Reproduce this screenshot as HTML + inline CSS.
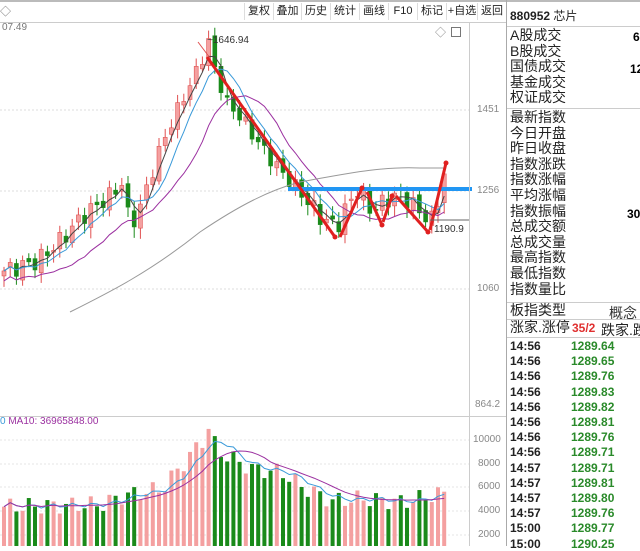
<!DOCTYPE html>
<html><head><meta charset="utf-8"><style>
body{margin:0;width:640px;height:546px;overflow:hidden;background:#fff;font-family:"Liberation Sans","Noto Sans CJK SC",sans-serif;position:relative}
.a{position:absolute;white-space:nowrap}
.tb{position:absolute;top:3px;height:17px;font-size:11px;color:#222;line-height:17px;text-align:center;border-left:1px solid #ddd}
.rp{position:absolute;left:510px;font-size:14px;color:#222;line-height:15.6px}
.t{position:absolute;left:510px;font-size:12px;font-weight:bold;color:#222}
.p{position:absolute;left:571px;font-size:12px;font-weight:bold;color:#2a8a2a}
</style></head><body>
<div class="a" style="left:0;top:0;width:640px;height:2px;background:#bbb"></div>
<div class="a" style="left:0;top:22px;width:506px;height:1px;background:#ccc"></div>
<div class="a" style="left:0;top:3px;font-size:11px;color:#777">◇</div>
<div class="tb" style="left:244px;width:28px">复权</div>
<div class="tb" style="left:273px;width:27px">叠加</div>
<div class="tb" style="left:301px;width:28px">历史</div>
<div class="tb" style="left:330px;width:28px">统计</div>
<div class="tb" style="left:359px;width:28px">画线</div>
<div class="tb" style="left:388px;width:28px">F10</div>
<div class="tb" style="left:417px;width:28px">标记</div>
<div class="tb" style="left:446px;width:30px">+自选</div>
<div class="tb" style="left:477px;width:28px;border-right:1px solid #ddd">返回</div>
<div class="a" style="left:2px;top:22px;font-size:10px;color:#777">07.49</div>
<div class="a" style="left:435px;top:24px;font-size:11px;color:#888">◇</div>
<div class="a" style="left:451px;top:27px;width:8px;height:8px;border:1px solid #777"></div>
<svg id="s" class="a" style="left:0;top:0" width="506" height="546"></svg>
<div class="a" style="left:469px;top:22px;width:1px;height:524px;background:#ccc"></div>
<div class="a" style="left:0;top:416px;width:506px;height:1px;background:#ccc"></div>
<div class="a" style="left:506px;top:0;width:1px;height:546px;background:#aaa"></div>
<div class="a" style="left:477px;top:104px;font-size:10px;color:#888">1451</div>
<div class="a" style="left:477px;top:185px;font-size:10px;color:#888">1256</div>
<div class="a" style="left:477px;top:283px;font-size:10px;color:#888">1060</div>
<div class="a" style="left:475px;top:399px;font-size:10px;color:#888">864.2</div>
<div class="a" style="left:473px;top:434px;font-size:10px;color:#888">10000</div>
<div class="a" style="left:478px;top:458px;font-size:10px;color:#888">8000</div>
<div class="a" style="left:478px;top:481px;font-size:10px;color:#888">6000</div>
<div class="a" style="left:478px;top:505px;font-size:10px;color:#888">4000</div>
<div class="a" style="left:478px;top:529px;font-size:10px;color:#888">2000</div>
<div class="a" style="left:0;top:416px;font-size:10px;color:#3a9ad9">0 <span style="color:#9b30a0">MA10: 36965848.00</span></div>
<div class="a" style="left:207px;top:35px;font-size:10px;color:#333">~1646.94</div>
<div class="a" style="left:434px;top:224px;font-size:10px;color:#333">1190.9</div>
<div class="a" style="left:507px;top:26px;width:133px;height:1px;background:#ccc"></div>
<div class="a" style="left:510px;top:7px;font-size:12px;color:#222;font-weight:bold">880952 <span style="font-weight:normal">芯片</span></div>
<div class="rp" style="top:28px">A股成交<br>B股成交<br>国债成交<br>基金成交<br>权证成交</div>
<div class="a" style="left:507px;top:108px;width:133px;height:1px;background:#ccc"></div>
<div class="rp" style="top:110px">最新指数<br>今日开盘<br>昨日收盘<br>指数涨跌<br>指数涨幅<br>平均涨幅<br>指数振幅<br>总成交额<br>总成交量<br>最高指数<br>最低指数<br>指数量比</div>
<div class="a" style="left:507px;top:302px;width:133px;height:1px;background:#ccc"></div>
<div class="rp" style="top:303px">板指类型</div>
<div class="a" style="left:609px;top:303px;font-size:14px;color:#333">概念</div>
<div class="a" style="left:507px;top:319px;width:133px;height:1px;background:#ccc"></div>
<div class="rp" style="top:320px">涨家.涨停</div>
<div class="a" style="left:572px;top:321px;font-size:12px;color:#e03030;font-weight:bold">35/2</div>
<div class="a" style="left:601px;top:320px;font-size:14px;color:#222">跌家.跌</div>
<div class="a" style="left:507px;top:337px;width:133px;height:1px;background:#ccc"></div>
<div class="a" style="left:633px;top:30px;font-size:12px;font-weight:bold">6</div>
<div class="a" style="left:630px;top:62px;font-size:12px;font-weight:bold">12</div>
<div class="a" style="left:627px;top:207px;font-size:12px;font-weight:bold">30</div>
<div id="tr"></div>
<script>
const S=document.getElementById('s');let h='';
function y(p){const k=[[1650,37],[1451,110],[1256,191],[1060,289],[864,405]];for(let i=0;i<4;i++){const[a,b]=k[i],[c,d]=k[i+1];if(p>=c)return b+(a-p)/(a-c)*(d-b);}return 405;}
[110,191,289].forEach(v=>h+=`<line x1="0" x2="469" y1="${v}" y2="${v}" stroke="#ddd" stroke-dasharray="2,2"/>`);
[440,464,487,511,535].forEach(v=>h+=`<line x1="0" x2="469" y1="${v}" y2="${v}" stroke="#e4e4e4" stroke-dasharray="2,2"/>`);
function mk(K){return x=>{for(let i=0;i<K.length-1;i++)if(x<=K[i+1][0]){const t=(x-K[i][0])/(K[i+1][0]-K[i][0]);return K[i][1]+t*(K[i+1][1]-K[i][1]);}return K[K.length-1][1];};}
const ip=mk([[0,1095],[35,1115],[60,1160],[80,1205],[110,1250],[120,1275],[128,1185],[140,1230],[160,1370],[190,1530],[200,1590],[207,1640],[213,1560],[225,1470],[240,1430],[260,1360],[280,1300],[300,1250],[320,1200],[335,1185],[345,1225],[355,1260],[370,1215],[385,1240],[400,1250],[420,1210],[432,1195],[440,1280],[446,1330]]);
const vk=mk([[0,3300],[100,3500],[120,4200],[160,4800],[180,6800],[200,8800],[207,10000],[215,8000],[250,6500],[280,6200],[300,5000],[330,3800],[360,4000],[400,3700],[446,4500]]);
const N=72,dx=6.2;let C=[],X=[],V=[];
for(let i=0;i<N;i++){const x=2+i*dx;X.push(x);C.push(ip(x)+Math.sin(i*2.3)*18);V.push(vk(x)+Math.sin(i*1.9)*700);}
for(let i=0;i<N;i++){const o=i?C[i-1]+Math.sin(i*1.7)*8:C[0]-10,c=C[i];const up=c>=o;const hi=Math.max(o,c)+8+Math.abs(Math.sin(i*3.1))*14,lo=Math.min(o,c)-8-Math.abs(Math.cos(i*2.7))*14;const col=up?'#e05050':'#1a8a1a';
h+=`<line x1="${X[i]+2}" x2="${X[i]+2}" y1="${y(hi)}" y2="${y(lo)}" stroke="${col}"/>`;
const t=y(Math.max(o,c)),b=y(Math.min(o,c));h+=`<rect x="${X[i]}" y="${t}" width="4" height="${Math.max(1,b-t)}" fill="${up?'#f4a0a0':'#1a8a1a'}" stroke="${col}" stroke-width="0.6"/>`;
const vy=546-(V[i]/2000)*23.8;
h+=`<rect x="${X[i]}" y="${vy}" width="4" height="${546-vy}" fill="${up?'#f4a0a0':'#1a8a1a'}"/>`;}
function ma(n,col,ofs){let d='';for(let i=0;i<N;i++){let s=0,m=0;for(let j=Math.max(0,i-n+1);j<=i;j++){s+=C[j];m++;}const v=s/m+ofs;d+=(i?'L':'M')+(X[i]+2)+' '+y(v).toFixed(1);}h+=`<path d="${d}" fill="none" stroke="${col}" stroke-width="1"/>`;}
ma(3,'#444',0);ma(6,'#3a9ad9',0);ma(12,'#9b30a0',-20);
h+=`<path d="M70 312 C110 292 150 272 200 232 C240 205 270 190 300 182 C340 175 380 166 420 168 L446 168" fill="none" stroke="#999"/>`;
function vma(n,col){let d='';for(let i=0;i<N;i++){let s=0,m=0;for(let j=Math.max(0,i-n+1);j<=i;j++){s+=V[j];m++;}d+=(i?'L':'M')+(X[i]+2)+' '+(546-s/m/2000*23.8).toFixed(1);}h+=`<path d="${d}" fill="none" stroke="${col}"/>`;}
vma(5,'#3a9ad9');vma(10,'#9b30a0');
h+=`<line x1="288" x2="472" y1="189" y2="189" stroke="#2196f3" stroke-width="4"/>`;
const R=[[[207,57],[335,237]],[[340,237],[362,188]],[[367,192],[382,225]],[[383,222],[392,196]],[[396,196],[428,232]],[[430,230],[446,163]]];
R.forEach(([a,b])=>h+=`<line x1="${a[0]}" y1="${a[1]}" x2="${b[0]}" y2="${b[1]}" stroke="#e02020" stroke-width="3"/><circle cx="${b[0]}" cy="${b[1]}" r="2.5" fill="#e02020"/>`);
h+=`<line x1="198" y1="42" x2="210" y2="58" stroke="#e05050"/><line x1="430" x2="469" y1="220" y2="220" stroke="#666"/>`;
S.innerHTML=h;
const T=[['14:56','1289.64'],['14:56','1289.65'],['14:56','1289.76'],['14:56','1289.83'],['14:56','1289.82'],['14:56','1289.81'],['14:56','1289.76'],['14:56','1289.71'],['14:57','1289.71'],['14:57','1289.81'],['14:57','1289.80'],['14:57','1289.76'],['15:00','1289.77'],['15:00','1290.25']];
let r='';T.forEach((v,i)=>{const t=339+i*15.2;r+=`<div class="t" style="top:${t}px">${v[0]}</div><div class="p" style="top:${t}px">${v[1]}</div>`;});document.getElementById('tr').innerHTML=r;
</script>
</body></html>
